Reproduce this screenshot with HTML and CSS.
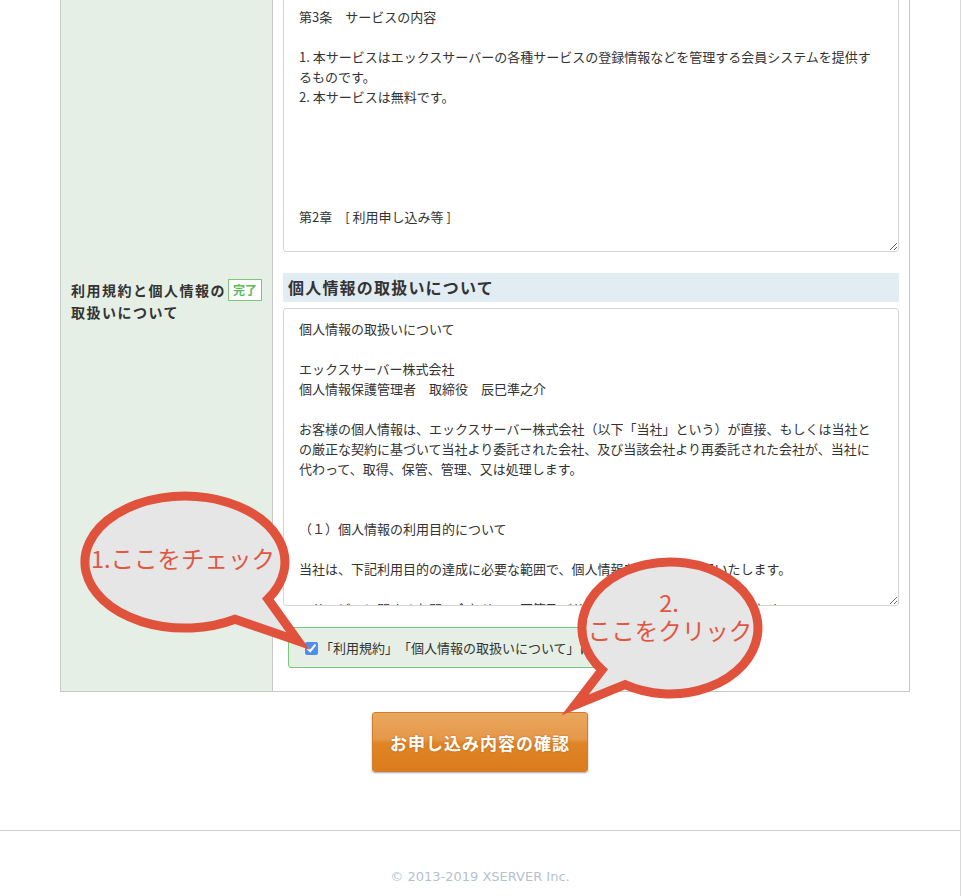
FILE: index.html
```html
<!DOCTYPE html>
<html lang="ja">
<head>
    <meta charset="UTF-8">
    <meta name="viewport" content="width=device-width, initial-scale=1.0">
    <title>お申し込み - 利用規約と個人情報の取扱い</title>
    <link rel="stylesheet" href="styles.css">
</head>
<body>
    <div class="page">
        <table class="form-table">
            <tr>
                <th></th>
                <td>
                    <textarea class="agreement agreement-terms" readonly>第3条　サービスの内容

1. 本サービスはエックスサーバーの各種サービスの登録情報などを管理する会員システムを提供す
るものです。
2. 本サービスは無料です。





第2章　[ 利用申し込み等 ]

第4条　利用申し込み
1. 本サービスの利用を希望する者は、本規約の内容に同意した上で、当社所定の方法により申し込むものとします。</textarea>
                </td>
            </tr>
            <tr>
                <th class="label"><span class="badge">完了</span>利用規約と個人情報の取扱いについて</th>
                <td>
                    <h3 class="section-title">個人情報の取扱いについて</h3>
                    <textarea class="agreement agreement-privacy" readonly>個人情報の取扱いについて

エックスサーバー株式会社
個人情報保護管理者　取締役　辰巳準之介

お客様の個人情報は、エックスサーバー株式会社（以下「当社」という）が直接、もしくは当社と
の厳正な契約に基づいて当社より委託された会社、及び当該会社より再委託された会社が、当社に
代わって、取得、保管、管理、又は処理します。


（１）個人情報の利用目的について

当社は、下記利用目的の達成に必要な範囲で、個人情報を取得し、利用いたします。

　サービスに関するお問い合わせへの回答及びサービスの提供に関する連絡のため
　料金の請求及びお支払いの確認のため</textarea>
                    <div class="agree-row">
                        <label class="agree"><input type="checkbox" checked>「利用規約」「個人情報の取扱いについて」に同意する</label>
                    </div>
                </td>
            </tr>
        </table>

        <div class="submit-area">
            <button class="submit-button" type="button">お申し込み内容の確認</button>
        </div>

        <footer class="footer">
            <p>&copy; 2013-2019 XSERVER Inc.</p>
        </footer>

        <svg class="notes" width="962" height="896" viewBox="0 0 962 896">
            <path class="bubble" d="M235 619.2 L298 641 L267.9 598.9 A100 66 0 1 0 235 619.2 Z"/>
            <text class="bubble-text" x="91" y="568">1.ここをチェック</text>
            <path class="bubble" d="M625 684.7 L575 705 L602 669.9 A88 66 0 1 1 625 684.7 Z"/>
            <text class="bubble-text" text-anchor="middle"><tspan x="669" y="612">2.</tspan><tspan x="670" dy="28">ここをクリック</tspan></text>
        </svg>
    </div>
</body>
</html>
```

FILE: styles.css
```css
body {
    margin: 0;
    padding: 0;
    background-color: #fff;
    color: #333;
    font-family: "Noto Sans CJK JP", sans-serif;
    font-size: 13px;
    text-spacing-trim: space-all;
}
.page {
    position: relative;
    display: flow-root;
    width: 960px;
    border-right: 1px solid #d8d8d8;
}
.form-table {
    margin: -16px 0 0 60px;
    width: 850px;
    border: 1px solid #c8c8c8;
    border-spacing: 0;
}
.form-table th {
    width: 191px;
    padding: 17px 10px 10px;
    background-color: #e5efe6;
    border-right: 1px solid #c8c8c8;
    text-align: left;
    vertical-align: top;
}
.form-table td {
    padding: 11px 10px 10px;
    vertical-align: top;
}
.label {
    font-size: 14px;
    line-height: 22px;
    letter-spacing: 1.5px;
    color: #333;
}
.badge {
    float: right;
    height: 20px;
    padding: 0 4px;
    border: 1px solid #7cc77c;
    background-color: #fff;
    color: #5cbc5c;
    font-size: 12px;
    line-height: 20px;
    letter-spacing: 0;
}
.section-title {
    margin: 0;
    height: 29px;
    padding-left: 5px;
    background-color: #e1ecf3;
    font-size: 16px;
    line-height: 29px;
    letter-spacing: 1.2px;
    color: #333;
}
.agreement {
    display: block;
    box-sizing: border-box;
    width: 616px;
    margin: 0;
    padding: 10px 16px 10px 15px;
    border: 1px solid #d4d4d4;
    border-radius: 3px;
    background-color: #fff;
    color: #333;
    font-family: "Noto Sans CJK JP", sans-serif;
    font-size: 13px;
    line-height: 20px;
    text-spacing-trim: space-all;
    overflow: hidden;
    resize: vertical;
}
.agreement-terms {
    height: 256px;
}
.agreement-privacy {
    height: 298px;
    margin-top: 6px;
}
.agree-row {
    margin: 21px 0 13px 5px;
}
.agree {
    display: inline-block;
    padding: 10px 20px 10px 15px;
    border: 1px solid #79c879;
    border-radius: 3px;
    background-color: #e5efe5;
    line-height: 19px;
}
.agree input {
    width: 13px;
    height: 13px;
    margin: 0 2px 0 1px;
    vertical-align: -2px;
    accent-color: #4f8ef0;
}
.submit-area {
    padding: 20px 0 58px;
    text-align: center;
}
.submit-button {
    width: 216px;
    height: 60px;
    padding: 0;
    border: 1px solid #d27d2a;
    border-radius: 3px;
    background: linear-gradient(#e9a75c 0%, #e5984a 45%, #df8527 52%, #dc7c1e 100%);
    box-shadow: 0 1px 2px rgba(0, 0, 0, 0.35);
    color: #fff;
    font-family: "Noto Sans CJK JP", sans-serif;
    font-size: 17px;
    font-weight: bold;
    letter-spacing: 1px;
    text-shadow: 0 0 2px rgba(150, 70, 0, 0.5);
    cursor: pointer;
}
.footer {
    border-top: 1px solid #cccccc;
    padding: 37px 0 20px;
    text-align: center;
}
.footer p {
    margin: 0;
    font-family: "DejaVu Sans", sans-serif;
    font-size: 13px;
    line-height: 18px;
    color: #b6c0d4;
}
.notes {
    position: absolute;
    left: 0;
    top: 0;
    pointer-events: none;
}
.bubble {
    fill: #e6e6e6;
    stroke: #e0523b;
    stroke-width: 9;
    stroke-linejoin: miter;
    stroke-miterlimit: 8;
}
.bubble-text {
    fill: #e05843;
    font-family: "Noto Sans CJK JP", sans-serif;
    font-size: 23.5px;
}
```
